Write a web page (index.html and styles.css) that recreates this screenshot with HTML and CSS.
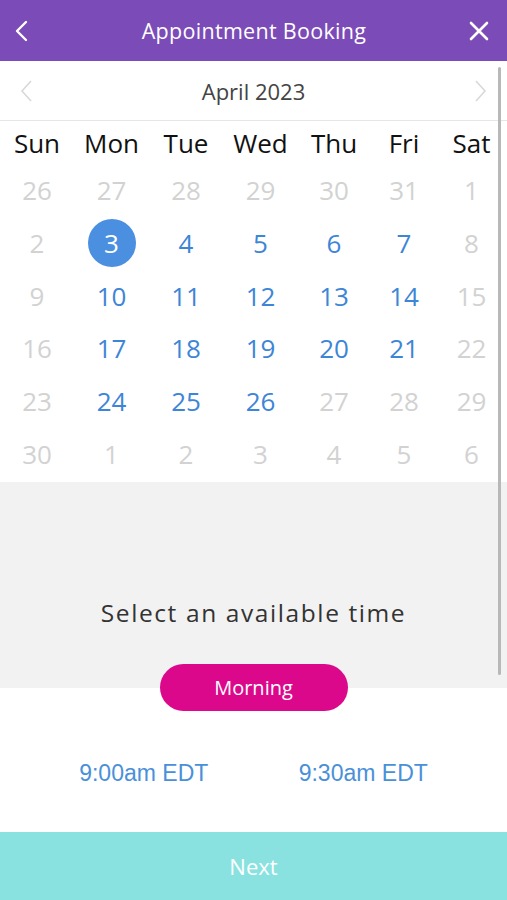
FILE: index.html
```html
<!DOCTYPE html>
<html>
<head>
    <title>Appointment Booking</title>
    <link rel="stylesheet" href="styles.css">
</head>
<body>
    <div class="app">
        <header class="topbar">
            <svg class="icon back" width="20" height="24" viewBox="0 0 20 24"><path d="M14 3 L5 12 L14 21" fill="none" stroke="#fff" stroke-width="2.4" stroke-linecap="round" stroke-linejoin="round"/></svg>
            <h1>Appointment Booking</h1>
            <svg class="icon close" width="22" height="22" viewBox="0 0 22 22"><path d="M3 3 L19 19 M19 3 L3 19" fill="none" stroke="#fff" stroke-width="2.6" stroke-linecap="round"/></svg>
        </header>

        <div class="month-nav">
            <svg width="16" height="26" viewBox="0 0 16 26"><path d="M12 3 L3 13 L12 23" fill="none" stroke="#d8d8d8" stroke-width="1.6"/></svg>
            <span class="month">April 2023</span>
            <svg width="16" height="26" viewBox="0 0 16 26"><path d="M4 3 L13 13 L4 23" fill="none" stroke="#d8d8d8" stroke-width="1.6"/></svg>
        </div>

        <div class="calendar">
            <div class="weekday">Sun</div>
            <div class="weekday">Mon</div>
            <div class="weekday">Tue</div>
            <div class="weekday">Wed</div>
            <div class="weekday">Thu</div>
            <div class="weekday">Fri</div>
            <div class="weekday">Sat</div>

            <div class="day off">26</div>
            <div class="day off">27</div>
            <div class="day off">28</div>
            <div class="day off">29</div>
            <div class="day off">30</div>
            <div class="day off">31</div>
            <div class="day off">1</div>

            <div class="day off">2</div>
            <div class="day selected"><span>3</span></div>
            <div class="day">4</div>
            <div class="day">5</div>
            <div class="day">6</div>
            <div class="day">7</div>
            <div class="day off">8</div>

            <div class="day off">9</div>
            <div class="day">10</div>
            <div class="day">11</div>
            <div class="day">12</div>
            <div class="day">13</div>
            <div class="day">14</div>
            <div class="day off">15</div>

            <div class="day off">16</div>
            <div class="day">17</div>
            <div class="day">18</div>
            <div class="day">19</div>
            <div class="day">20</div>
            <div class="day">21</div>
            <div class="day off">22</div>

            <div class="day off">23</div>
            <div class="day">24</div>
            <div class="day">25</div>
            <div class="day">26</div>
            <div class="day off">27</div>
            <div class="day off">28</div>
            <div class="day off">29</div>

            <div class="day off">30</div>
            <div class="day off">1</div>
            <div class="day off">2</div>
            <div class="day off">3</div>
            <div class="day off">4</div>
            <div class="day off">5</div>
            <div class="day off">6</div>
        </div>

        <div class="time-section">
            <p>Select an available time</p>
        </div>

        <div class="period">
            <span class="pill">Morning</span>
        </div>

        <div class="slots">
            <span>9:00am EDT</span>
            <span>9:30am EDT</span>
        </div>

        <button class="next">Next</button>

        <div class="scrollbar"></div>
    </div>
</body>
</html>
```

FILE: styles.css
```css
body {
    margin: 0;
    font-family: "Open Sans", Arial, sans-serif;
    background: #fff;
}
.app {
    position: relative;
    width: 507px;
    height: 900px;
    overflow: hidden;
    display: flex;
    flex-direction: column;
}
.topbar {
    height: 61px;
    background: #7b4bb7;
    display: flex;
    align-items: center;
    justify-content: space-between;
    padding: 0 17px 0 12px;
}
.topbar h1 {
    margin: 0 0 0 8px;
    color: #fff;
    font-size: 21.5px;
    font-weight: 400;
    letter-spacing: 0.3px;
}
.month-nav {
    height: 59px;
    border-bottom: 1px solid #e6e6e6;
    display: flex;
    align-items: center;
    justify-content: space-between;
    padding: 0 19px 0 19px;
}
.month {
    font-size: 22px;
    color: #444;
}
.calendar {
    display: grid;
    grid-template-columns: 74px 75px 74px 75px 72px 68px 67px;
    grid-template-rows: 43px repeat(6, 52.67px);
    padding-bottom: 2px;
}
.weekday {
    display: flex;
    align-items: center;
    justify-content: center;
    font-size: 26px;
    color: #111;
}
.day {
    display: flex;
    align-items: center;
    justify-content: center;
    font-size: 26px;
    color: #3d85d6;
}
.day.off {
    color: #d2d2d2;
}
.day.selected span {
    width: 48px;
    height: 48px;
    border-radius: 50%;
    background: #4a8fe0;
    color: #fff;
    display: flex;
    align-items: center;
    justify-content: center;
}
.time-section {
    height: 206px;
    background: #f2f2f2;
    display: flex;
    align-items: flex-end;
    justify-content: center;
}
.time-section p {
    margin: 0 0 59px 0;
    font-size: 24.5px;
    letter-spacing: 1.6px;
    color: #333;
}
.period {
    display: flex;
    justify-content: center;
    margin-top: -24px;
}
.pill {
    width: 188px;
    height: 47px;
    border-radius: 24px;
    background: #dc088c;
    color: #fff;
    font-size: 20px;
    display: flex;
    align-items: center;
    justify-content: center;
}
.slots {
    display: flex;
    justify-content: space-around;
    padding: 49px 34px 0 34px;
    font-family: "Liberation Sans", Arial, sans-serif;
    font-size: 23px;
    color: #4a90d9;
}
.next {
    height: 68px;
    border: none;
    background: #8ae2e0;
    color: #fff;
    font-family: "Open Sans", Arial, sans-serif;
    font-size: 22px;
    margin-top: auto;
    padding: 0;
}
.scrollbar {
    position: absolute;
    left: 498px;
    top: 67px;
    width: 3px;
    height: 608px;
    border-radius: 2px;
    background: #b8b8b8;
}
```
